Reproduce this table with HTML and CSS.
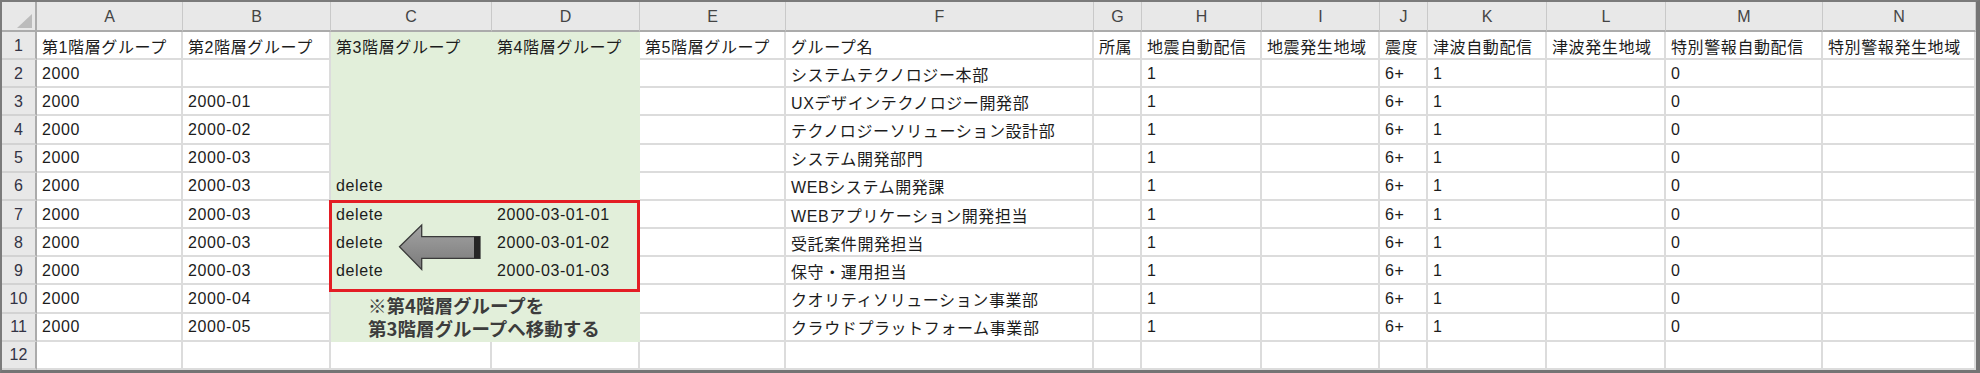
FILE: index.html
```html
<!DOCTYPE html>
<html lang="ja">
<head>
<meta charset="utf-8">
<title>Sheet</title>
<link rel="stylesheet" href="styles.css">
</head>
<body>
<div class="sheet">
  <div class="grid">
    <div class="hd corner"><span class="tri"></span></div>
    <div class="hd">A</div><div class="hd">B</div><div class="hd">C</div><div class="hd">D</div><div class="hd">E</div><div class="hd">F</div><div class="hd">G</div><div class="hd">H</div><div class="hd">I</div><div class="hd">J</div><div class="hd">K</div><div class="hd">L</div><div class="hd">M</div><div class="hd">N</div>

    <div class="rh">1</div>
    <div class="c">第1階層グループ</div><div class="c">第2階層グループ</div><div class="c g">第3階層グループ</div><div class="c g">第4階層グループ</div><div class="c">第5階層グループ</div><div class="c">グループ名</div><div class="c">所属</div><div class="c">地震自動配信</div><div class="c">地震発生地域</div><div class="c">震度</div><div class="c">津波自動配信</div><div class="c">津波発生地域</div><div class="c">特別警報自動配信</div><div class="c">特別警報発生地域</div>

    <div class="rh">2</div>
    <div class="c">2000</div><div class="c"></div><div class="c g"></div><div class="c g"></div><div class="c"></div><div class="c">システムテクノロジー本部</div><div class="c"></div><div class="c">1</div><div class="c"></div><div class="c">6+</div><div class="c">1</div><div class="c"></div><div class="c">0</div><div class="c"></div>

    <div class="rh">3</div>
    <div class="c">2000</div><div class="c">2000-01</div><div class="c g"></div><div class="c g"></div><div class="c"></div><div class="c">UXデザインテクノロジー開発部</div><div class="c"></div><div class="c">1</div><div class="c"></div><div class="c">6+</div><div class="c">1</div><div class="c"></div><div class="c">0</div><div class="c"></div>

    <div class="rh">4</div>
    <div class="c">2000</div><div class="c">2000-02</div><div class="c g"></div><div class="c g"></div><div class="c"></div><div class="c">テクノロジーソリューション設計部</div><div class="c"></div><div class="c">1</div><div class="c"></div><div class="c">6+</div><div class="c">1</div><div class="c"></div><div class="c">0</div><div class="c"></div>

    <div class="rh">5</div>
    <div class="c">2000</div><div class="c">2000-03</div><div class="c g"></div><div class="c g"></div><div class="c"></div><div class="c">システム開発部門</div><div class="c"></div><div class="c">1</div><div class="c"></div><div class="c">6+</div><div class="c">1</div><div class="c"></div><div class="c">0</div><div class="c"></div>

    <div class="rh">6</div>
    <div class="c">2000</div><div class="c">2000-03</div><div class="c g">delete</div><div class="c g"></div><div class="c"></div><div class="c">WEBシステム開発課</div><div class="c"></div><div class="c">1</div><div class="c"></div><div class="c">6+</div><div class="c">1</div><div class="c"></div><div class="c">0</div><div class="c"></div>

    <div class="rh">7</div>
    <div class="c">2000</div><div class="c">2000-03</div><div class="c g">delete</div><div class="c g">2000-03-01-01</div><div class="c"></div><div class="c">WEBアプリケーション開発担当</div><div class="c"></div><div class="c">1</div><div class="c"></div><div class="c">6+</div><div class="c">1</div><div class="c"></div><div class="c">0</div><div class="c"></div>

    <div class="rh">8</div>
    <div class="c">2000</div><div class="c">2000-03</div><div class="c g">delete</div><div class="c g">2000-03-01-02</div><div class="c"></div><div class="c">受託案件開発担当</div><div class="c"></div><div class="c">1</div><div class="c"></div><div class="c">6+</div><div class="c">1</div><div class="c"></div><div class="c">0</div><div class="c"></div>

    <div class="rh">9</div>
    <div class="c">2000</div><div class="c">2000-03</div><div class="c g">delete</div><div class="c g">2000-03-01-03</div><div class="c"></div><div class="c">保守・運用担当</div><div class="c"></div><div class="c">1</div><div class="c"></div><div class="c">6+</div><div class="c">1</div><div class="c"></div><div class="c">0</div><div class="c"></div>

    <div class="rh">10</div>
    <div class="c">2000</div><div class="c">2000-04</div><div class="c g"></div><div class="c g"></div><div class="c"></div><div class="c">クオリティソリューション事業部</div><div class="c"></div><div class="c">1</div><div class="c"></div><div class="c">6+</div><div class="c">1</div><div class="c"></div><div class="c">0</div><div class="c"></div>

    <div class="rh">11</div>
    <div class="c">2000</div><div class="c">2000-05</div><div class="c g"></div><div class="c g"></div><div class="c"></div><div class="c">クラウドプラットフォーム事業部</div><div class="c"></div><div class="c">1</div><div class="c"></div><div class="c">6+</div><div class="c">1</div><div class="c"></div><div class="c">0</div><div class="c"></div>

    <div class="rh">12</div>
    <div class="c"></div><div class="c"></div><div class="c"></div><div class="c"></div><div class="c"></div><div class="c"></div><div class="c"></div><div class="c"></div><div class="c"></div><div class="c"></div><div class="c"></div><div class="c"></div><div class="c"></div><div class="c"></div>
  </div>

  <div class="redbox"></div>
  <svg class="arrow" width="90" height="54" viewBox="0 0 90 54">
    <defs>
      <linearGradient id="ag" x1="0" y1="0" x2="0" y2="1">
        <stop offset="0" stop-color="#a3a3a3"/>
        <stop offset="1" stop-color="#7a7a7a"/>
      </linearGradient>
    </defs>
    <polygon points="3.5,24.7 25.7,3 25.7,14.7 84,14.7 84,36.3 25.7,36.3 25.7,47.5" fill="url(#ag)" stroke="#3a3a3a" stroke-width="1.3" stroke-linejoin="miter"/>
    <rect x="78" y="14.7" width="6" height="21.6" fill="#262626"/>
  </svg>
  <div class="note">※第4階層グループを<br>第3階層グループへ移動する</div>
</div>
</body>
</html>
```

FILE: styles.css
```css
* { box-sizing: border-box; }
html, body { margin: 0; padding: 0; background: #ffffff; }
body {
  width: 1980px;
  height: 373px;
  overflow: hidden;
  font-family: "Liberation Sans", "Noto Sans CJK JP", sans-serif;
}
.sheet {
  position: relative;
  width: 1980px;
  height: 373px;
  border-top: 2px solid #7b7b7b;
  border-left: 2px solid #7b7b7b;
  border-right: 4px solid #747474;
  border-bottom: 3px solid #747474;
  background: #ffffff;
}
.grid {
  display: grid;
  grid-template-columns: 35px 146px 148px 161px 148px 146px 308px 48px 120px 118px 48px 119px 119px 157px 153px;
  grid-template-rows: 30px repeat(12, 1fr);
  height: 368px;
}
.hd {
  background: #e8e8e8;
  border-right: 1px solid #c9c9c9;
  border-bottom: 2px solid #ababab;
  color: #444444;
  font-size: 16px;
  display: flex;
  align-items: center;
  justify-content: center;
  padding-top: 2px;
}
.corner {
  position: relative;
  border-right: 2px solid #ababab;
}
.tri {
  position: absolute;
  right: 3px;
  bottom: 2px;
  width: 0;
  height: 0;
  border-left: 15px solid transparent;
  border-bottom: 14px solid #bcbcbc;
}
.rh {
  background: #e8e8e8;
  border-right: 2px solid #ababab;
  border-bottom: 2px solid #d2d2d2;
  color: #333344;
  font-size: 16px;
  display: flex;
  align-items: center;
  justify-content: center;
  padding-top: 1px;
}
.c {
  border-right: 2px solid #dcdcdc;
  border-bottom: 2px solid #dcdcdc;
  color: #1c1c1c;
  font-size: 16px;
  letter-spacing: 0.6px;
  white-space: nowrap;
  overflow: hidden;
  display: flex;
  align-items: center;
  padding: 1px 0 0 5px;
}
.c.g {
  background: #e2efda;
  border-color: #e2efda;
}
.redbox {
  position: absolute;
  left: 327px;
  top: 198px;
  width: 311px;
  height: 92px;
  border: 3px solid #e31d24;
}
.arrow {
  position: absolute;
  left: 394px;
  top: 220px;
}
.note {
  position: absolute;
  left: 366px;
  top: 292px;
  font-family: "Noto Sans CJK JP", sans-serif;
  font-weight: 700;
  font-size: 18.5px;
  line-height: 22.7px;
  color: #3c3c3c;
}
```
